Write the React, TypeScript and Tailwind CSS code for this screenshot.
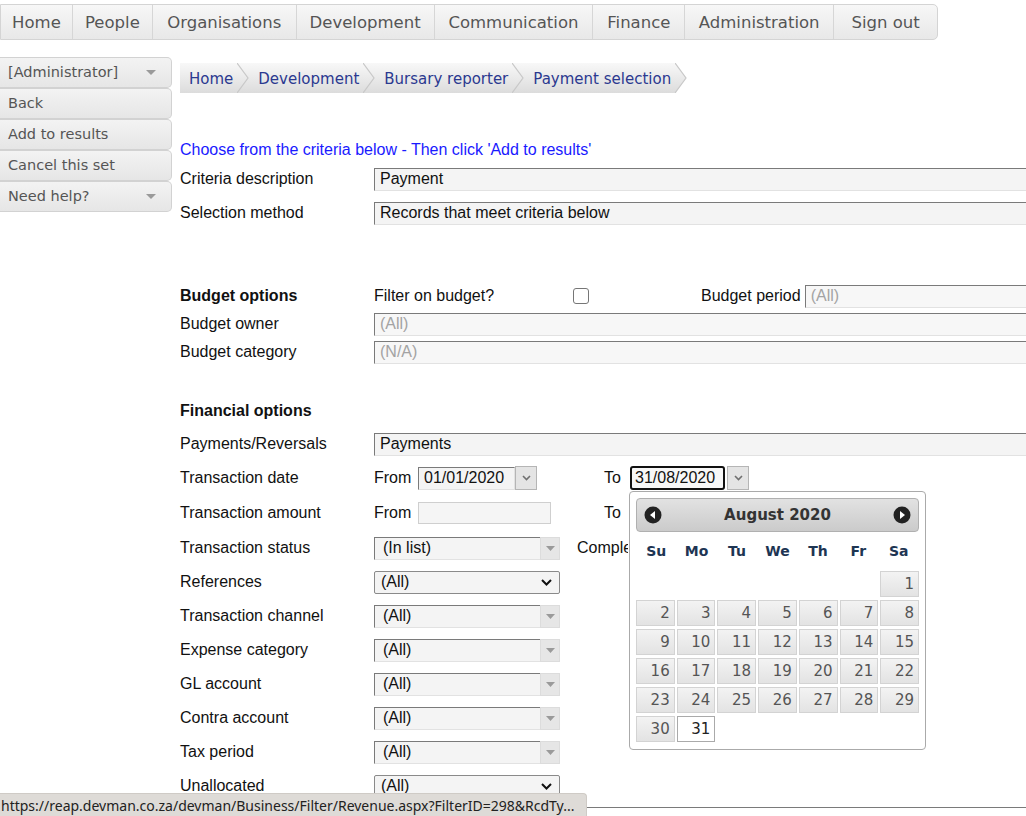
import React from 'react';

const navItems: { label: string; w: string }[] = [
  { label: 'Home', w: 'w-[72px]' },
  { label: 'People', w: 'w-[80px]' },
  { label: 'Organisations', w: 'w-[144px]' },
  { label: 'Development', w: 'w-[138px]' },
  { label: 'Communication', w: 'w-[159px]' },
  { label: 'Finance', w: 'w-[92px]' },
  { label: 'Administration', w: 'w-[149px]' },
  { label: 'Sign out', w: 'w-[103px]' },
];

const sideItems = [
  { label: '[Administrator]', caret: true },
  { label: 'Back', caret: false },
  { label: 'Add to results', caret: false },
  { label: 'Cancel this set', caret: false },
  { label: 'Need help?', caret: true },
];

const crumbs = ['Home', 'Development', 'Bursary reporter', 'Payment selection'];

const sans = "font-['Liberation_Sans',Arial,sans-serif]";
const dv = "font-['DejaVu_Sans',Verdana,sans-serif]";

const TextBox: React.FC<{ value?: string; disabled?: boolean; w: string }> = ({ value, disabled, w }) => (
  <div
    className={`${w} h-[23px] shrink-0 border border-t-[#7a7a7a] border-l-[#7a7a7a] border-b-[#e2e2e2] border-r-[#e2e2e2] flex items-center pl-[5px] whitespace-nowrap ${
      disabled ? 'bg-[#f7f7f7] text-[#a3a3a3]' : 'bg-[#f4f4f4] text-[#111]'
    }`}
  >
    {value}
  </div>
);

const Combo: React.FC<{ value: string }> = ({ value }) => (
  <div className="flex w-[186px] h-[23px] shrink-0">
    <div className="flex-1 border border-t-[#7a7a7a] border-l-[#7a7a7a] border-b-[#e2e2e2] border-r-0 bg-[#f4f4f4] flex items-center pl-[8px] text-[#111]">
      {value}
    </div>
    <div className="w-[20px] bg-[#e6e6e6] border border-[#dcdcdc] flex items-center justify-center">
      <svg width="9" height="5" viewBox="0 0 9 5">
        <path d="M0 0 L9 0 L4.5 5 Z" fill="#9a9a9a" />
      </svg>
    </div>
  </div>
);

const NativeSelect: React.FC<{ value: string }> = ({ value }) => (
  <div className="w-[186px] h-[23px] shrink-0 border border-[#8a8a8a] rounded-[2px] bg-[#f4f4f4] flex items-center justify-between pl-[6px] pr-[7px] text-[#111]">
    <span>{value}</span>
    <svg width="11" height="7" viewBox="0 0 11 7">
      <path d="M1 1 L5.5 5.5 L10 1" stroke="#111" strokeWidth="2" fill="none" />
    </svg>
  </div>
);

const DateBtn = () => (
  <div className="w-[22px] h-[24px] shrink-0 bg-[#e4e4e4] border border-[#b5b5b5] flex items-center justify-center">
    <svg width="9" height="6" viewBox="0 0 9 6">
      <path d="M1 1 L4.5 4.5 L8 1" stroke="#707070" strokeWidth="1.6" fill="none" />
    </svg>
  </div>
);

const Row: React.FC<{ label: string; h?: string; bold?: boolean; children?: React.ReactNode }> = ({
  label,
  h = 'h-[34px]',
  bold,
  children,
}) => (
  <div className={`flex items-center ${h}`}>
    <div className={`w-[194px] shrink-0 ${bold ? 'font-bold' : ''}`}>{label}</div>
    <div className="flex items-center whitespace-nowrap">{children}</div>
  </div>
);

const Calendar = () => {
  const days: (number | null)[] = [null, null, null, null, null, null];
  for (let i = 1; i <= 31; i++) days.push(i);
  return (
    <div className="absolute left-[629px] top-[491px] z-10 w-[297px] h-[259px] bg-white border border-[#aaaaaa] rounded-[4px] p-[6px]">
      <div className="h-[34px] rounded-[4px] border border-[#b0b0b0] bg-gradient-to-b from-[#e2e2e2] to-[#cbcbcb] flex items-center justify-between px-[7px]">
        <svg width="18" height="18" viewBox="0 0 18 18">
          <circle cx="9" cy="9" r="8.5" fill="#222" />
          <path d="M11 5 L6 9 L11 13 Z" fill="#fff" />
        </svg>
        <span className={`${dv} font-bold text-[15px] text-[#333]`}>August 2020</span>
        <svg width="18" height="18" viewBox="0 0 18 18">
          <circle cx="9" cy="9" r="8.5" fill="#222" />
          <path d="M7 5 L12 9 L7 13 Z" fill="#fff" />
        </svg>
      </div>
      <div className={`grid grid-cols-7 h-[39px] items-center ${dv} font-bold text-[14px] text-[#1e3553] text-center`}>
        {['Su', 'Mo', 'Tu', 'We', 'Th', 'Fr', 'Sa'].map((d) => (
          <div key={d}>{d}</div>
        ))}
      </div>
      <div className={`grid grid-cols-7 gap-x-[2px] gap-y-[3px] ${dv} text-[15px]`}>
        {days.map((d, i) =>
          d === null ? (
            <div key={i} className="h-[26px]" />
          ) : d === 31 ? (
            <div key={i} className="h-[26px] bg-white border border-[#aaaaaa] text-[#222] flex items-center justify-end pr-[4px]">
              {d}
            </div>
          ) : (
            <div
              key={i}
              className="h-[26px] bg-gradient-to-b from-[#f3f3f3] to-[#e3e3e3] border border-[#d3d3d3] text-[#555] flex items-center justify-end pr-[4px]"
            >
              {d}
            </div>
          )
        )}
      </div>
    </div>
  );
};

export default function App() {
  return (
    <div className="relative w-[1026px] h-[816px] overflow-hidden bg-white">
      {/* top navigation */}
      <div className="pt-[4px]">
        <div className={`flex w-[938px] h-[36px] border border-[#d4d4d4] rounded-r-[5px] bg-gradient-to-b from-[#f7f7f7] to-[#e8e8e8] ${dv} text-[16.5px] text-[#555]`}>
          {navItems.map((n, i) => (
            <div
              key={n.label}
              className={`${n.w} flex items-center justify-center pt-[2px] ${i < navItems.length - 1 ? 'border-r border-[#d6d6d6]' : ''}`}
            >
              {n.label}
            </div>
          ))}
        </div>
      </div>

      <div className="flex">
        {/* side menu */}
        <div className={`w-[172px] shrink-0 mt-[17px] ${dv} text-[14.5px] text-[#555]`}>
          {sideItems.map((s) => (
            <div
              key={s.label}
              className="h-[31px] border border-l-0 border-[#d2d2d2] rounded-r-[5px] bg-gradient-to-b from-[#f3f3f3] to-[#e6e6e6] flex items-center justify-between pl-[8px] pr-[15px]"
            >
              <span>{s.label}</span>
              {s.caret && (
                <svg width="10" height="5" viewBox="0 0 10 5">
                  <path d="M0 0 L10 0 L5 5 Z" fill="#9a9a9a" />
                </svg>
              )}
            </div>
          ))}
        </div>

        {/* main */}
        <div className={`ml-[8px] flex-1 ${sans} text-[16px] text-[#111]`}>
          {/* breadcrumb */}
          <div className={`mt-[23px] flex h-[30px] ${dv} text-[15px] text-[#2b3990]`}>
            {crumbs.map((c, i) => (
              <div key={c} className="flex h-full">
                <div className="h-full flex items-center bg-gradient-to-b from-[#f8f8f8] to-[#dcdcdc] pl-[9px] pr-[4px] pt-[2px]">{c}</div>
                <svg width="12" height="30" viewBox="0 0 12 30" className="shrink-0">
                  <defs>
                    <linearGradient id={`g${i}`} x1="0" y1="0" x2="0" y2="1">
                      <stop offset="0" stopColor="#f8f8f8" />
                      <stop offset="1" stopColor="#dcdcdc" />
                    </linearGradient>
                  </defs>
                  {i < crumbs.length - 1 && <rect x="0" y="0" width="12" height="30" fill={`url(#g${i})`} />}
                  <path d="M0 0 L11 15 L0 30 Z" fill={`url(#g${i})`} />
                  <path d="M0 0 L11 15 L0 30" fill="none" stroke="#c8c8c8" strokeWidth="1.2" />
                </svg>
              </div>
            ))}
          </div>

          <div className="mt-[47px] h-[20px] flex items-center text-[#1a1aff]">
            Choose from the criteria below - Then click 'Add to results'
          </div>

          <div className="mt-[2px]" />
          <Row label="Criteria description">
            <TextBox value="Payment" w="w-[700px]" />
          </Row>
          <Row label="Selection method">
            <TextBox value="Records that meet criteria below" w="w-[700px]" />
          </Row>

          <div className="h-[52px]" />

          <Row label="Budget options" h="h-[28px]" bold>
            <div className="w-[199px] shrink-0">Filter on budget?</div>
            <div className="w-[16px] h-[16px] shrink-0 border border-[#767676] rounded-[3px] bg-white" />
            <div className="ml-[112px] mr-[4px] shrink-0">Budget period</div>
            <TextBox value="(All)" w="w-[300px]" disabled />
          </Row>
          <Row label="Budget owner" h="h-[28px]">
            <TextBox value="(All)" w="w-[700px]" disabled />
          </Row>
          <Row label="Budget category" h="h-[28px]">
            <TextBox value="(N/A)" w="w-[700px]" disabled />
          </Row>

          <div className="h-[29px]" />

          <Row label="Financial options" h="h-[32px]" bold />
          <Row label="Payments/Reversals">
            <TextBox value="Payments" w="w-[700px]" />
          </Row>
          <Row label="Transaction date">
            <div className="w-[44px]">From</div>
            <TextBox value="01/01/2020" w="w-[97px]" />
            <DateBtn />
            <div className="ml-[67px] w-[26px]">To</div>
            <div className="w-[95px] h-[24px] border-2 border-[#111] rounded-[3px] bg-[#f7f7f7] flex items-center pl-[3px]">
              31/08/2020
            </div>
            <div className="ml-[2px]">
              <DateBtn />
            </div>
          </Row>
          <Row label="Transaction amount" h="h-[36px]">
            <div className="w-[44px]">From</div>
            <div className="w-[133px] h-[22px] border border-[#cfcfcf] bg-[#f5f5f5]" />
            <div className="ml-[53px] w-[26px]">To</div>
          </Row>
          <Row label="Transaction status">
            <Combo value="(In list)" />
            <div className="ml-[17px] w-[51px] overflow-hidden">Completed</div>
          </Row>
          <Row label="References">
            <NativeSelect value="(All)" />
          </Row>
          <Row label="Transaction channel">
            <Combo value="(All)" />
          </Row>
          <Row label="Expense category">
            <Combo value="(All)" />
          </Row>
          <Row label="GL account">
            <Combo value="(All)" />
          </Row>
          <Row label="Contra account">
            <Combo value="(All)" />
          </Row>
          <Row label="Tax period">
            <Combo value="(All)" />
          </Row>
          <Row label="Unallocated">
            <NativeSelect value="(All)" />
          </Row>
          <div className="mt-[4px] h-[1px] bg-[#7a7a7a]" />
        </div>
      </div>

      <Calendar />

      {/* browser status bar */}
      <div className="absolute left-0 bottom-0 z-20 w-[587px] h-[23px] bg-[#dedbd7] border-t border-r border-[#cfcbc6] rounded-tr-[4px] flex items-center pl-[1px] font-['Noto_Sans',sans-serif] text-[14px] text-[#222] whitespace-nowrap overflow-hidden">
        https://reap.devman.co.za/devman/Business/Filter/Revenue.aspx?FilterID=298&amp;RcdTy...
      </div>
    </div>
  );
}
